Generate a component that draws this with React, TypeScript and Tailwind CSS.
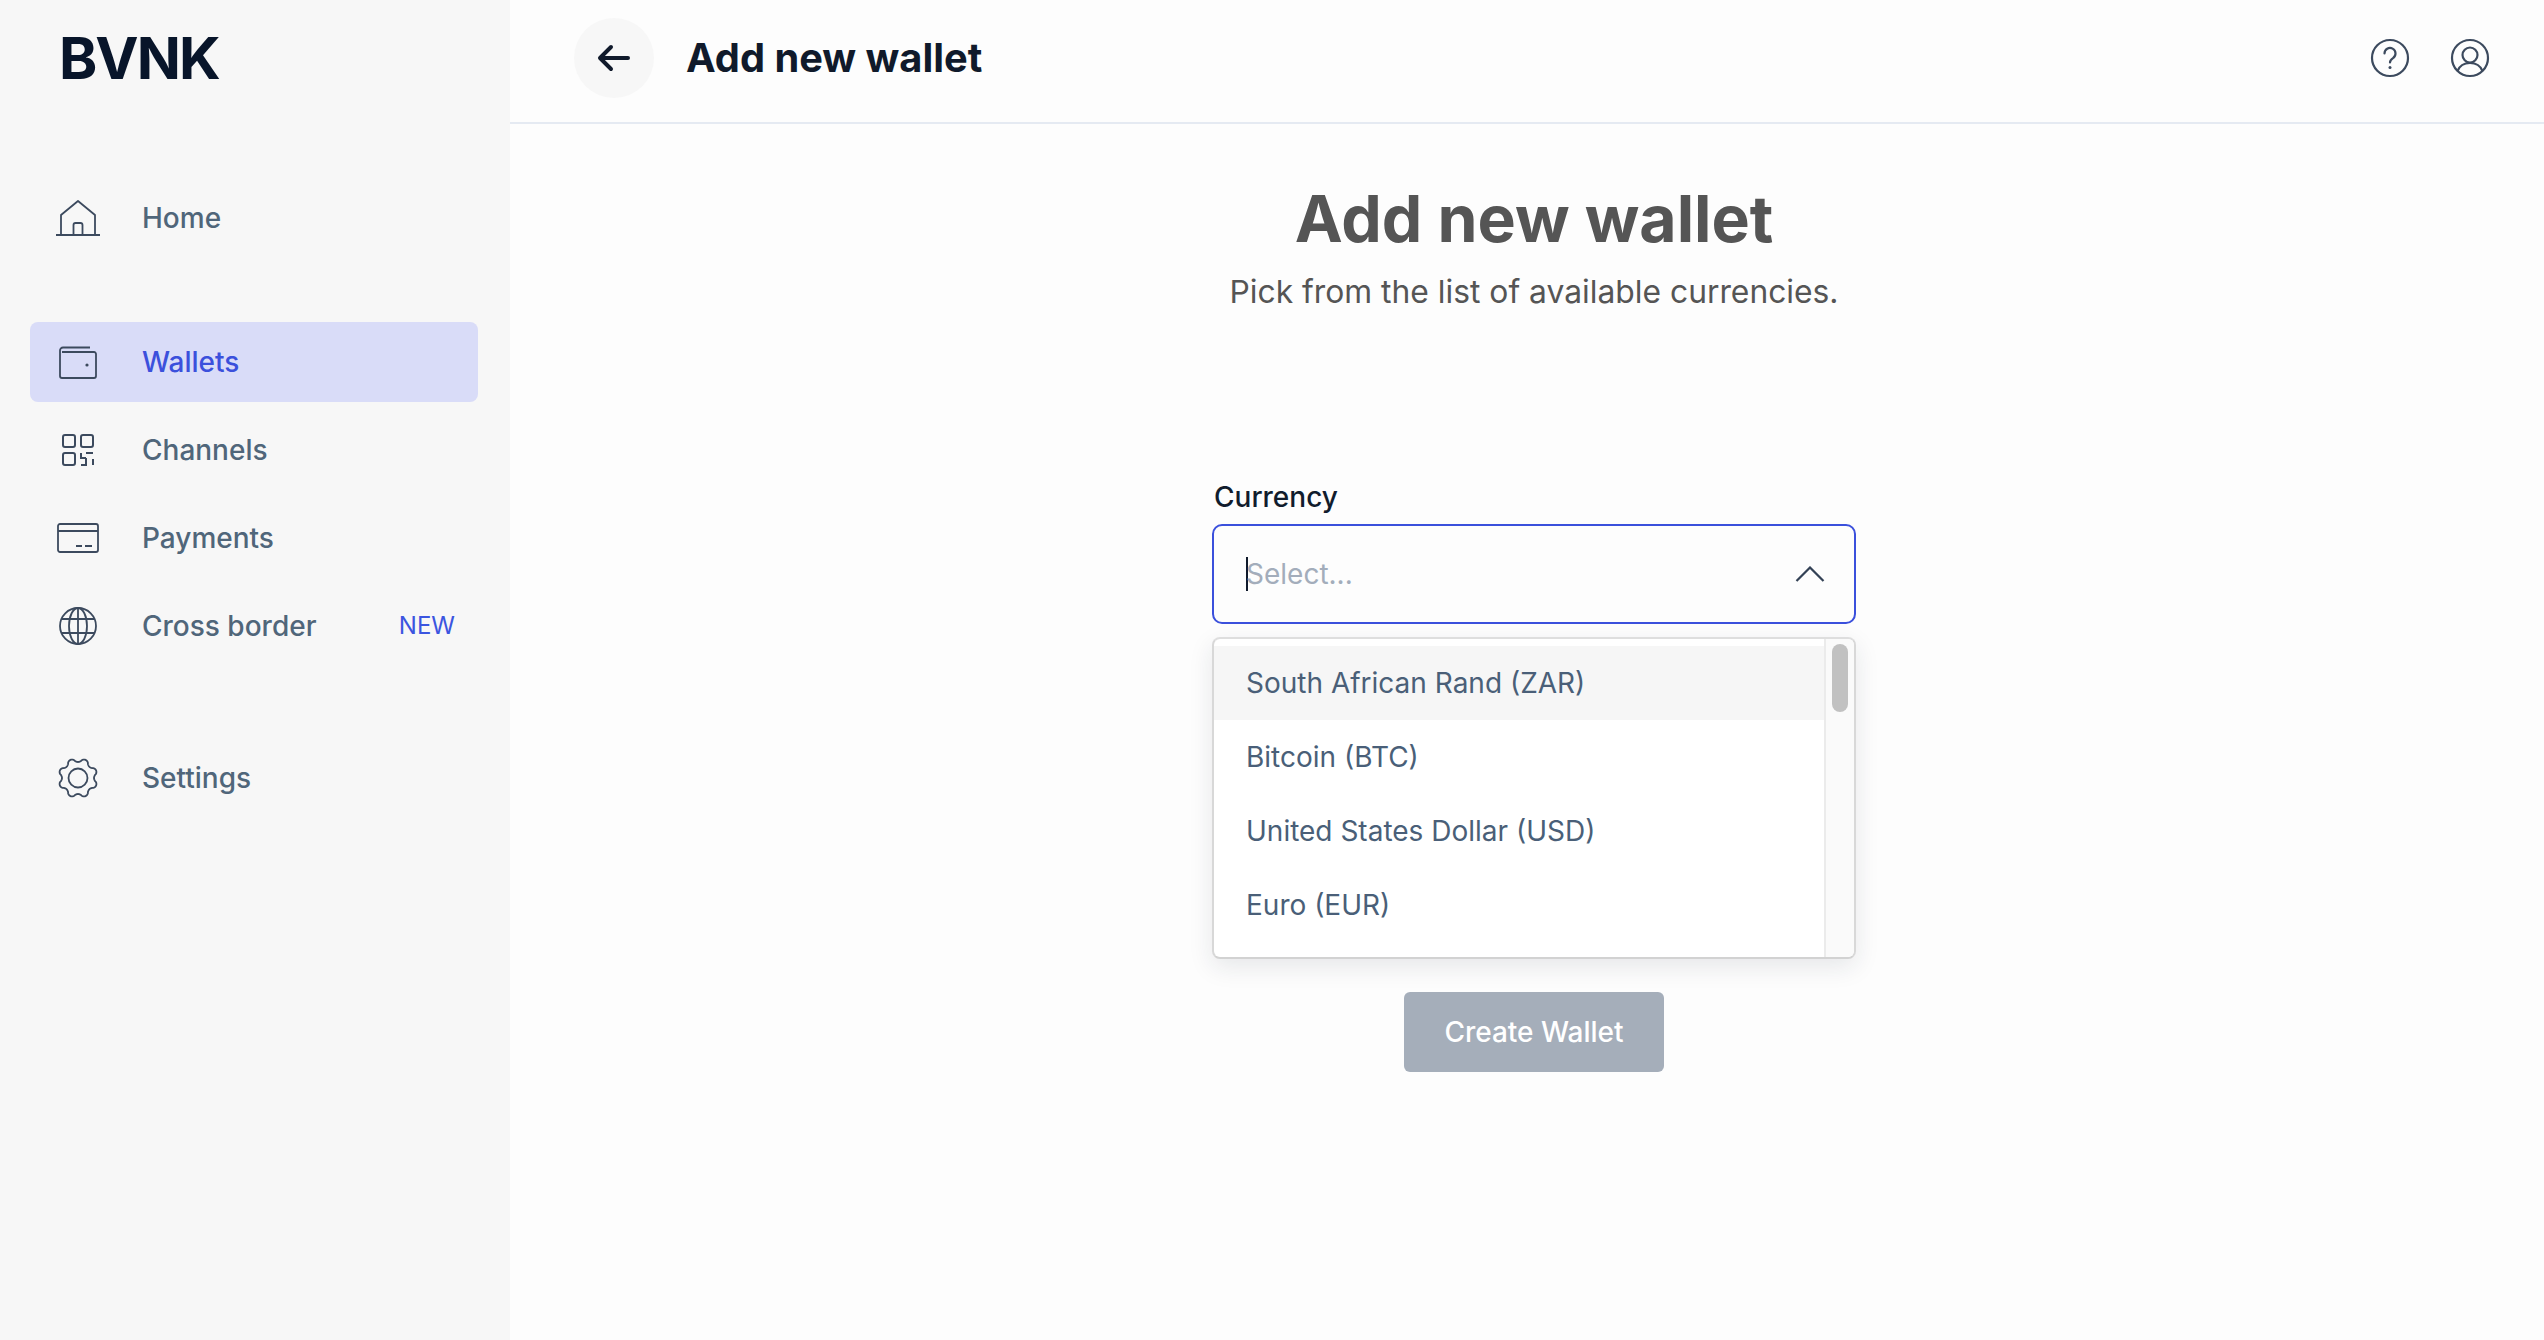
import React from "react";

function gearPath(cx: number, cy: number, base: number, amp: number, lobes: number) {
  const pts: string[] = [];
  const n = 240;
  for (let i = 0; i <= n; i++) {
    const t = (i / n) * Math.PI * 2;
    const w = Math.cos(lobes * t + Math.PI / 8 * lobes);
    const r = base + amp * Math.sign(w) * Math.pow(Math.abs(w), 0.7);
    pts.push(`${i === 0 ? "M" : "L"}${(cx + r * Math.sin(t)).toFixed(2)} ${(cy - r * Math.cos(t)).toFixed(2)}`);
  }
  return pts.join(" ") + "Z";
}

const HomeIcon = () => (
  <svg width="44" height="38" viewBox="0 0 44 38" fill="none" stroke="#3c4a5e" strokeWidth="1.800">
    <path d="M0 36H44" />
    <path d="M5 36V16L22 2L39 16V36" strokeLinejoin="round" />
    <path d="M17.500 36V26a2 2 0 0 1 2-2h5a2 2 0 0 1 2 2V36" />
  </svg>
);
const WalletIcon = () => (
  <svg width="38" height="33" viewBox="0 0 38 33" fill="none" stroke="#3c4a5e" strokeWidth="1.800">
    <path d="M31 1.500H4a3 3 0 0 0-3 3V30a2 2 0 0 0 2 2H35a2 2 0 0 0 2-2V8a2 2 0 0 0-2-2H3" />
    <circle cx="28" cy="19" r="1.600" fill="#3c4a5e" stroke="none" />
  </svg>
);
const QrIcon = () => (
  <svg width="32" height="32" viewBox="0 0 32 32" fill="none" stroke="#3c4a5e" strokeWidth="2">
    <rect x="1" y="1" width="12" height="12" rx="2" />
    <rect x="19" y="1" width="12" height="12" rx="2" />
    <rect x="1" y="19" width="12" height="12" rx="2" />
    <path d="M19 19V24H24M24 19H31M24 24V31H19M31 25V31M19 28H19.010" />
  </svg>
);
const CardIcon = () => (
  <svg width="42" height="30" viewBox="0 0 42 30" fill="none" stroke="#3c4a5e" strokeWidth="1.800">
    <rect x="1" y="1" width="40" height="28" rx="2" />
    <path d="M1 8H41M19 23H25M28 23H35" />
  </svg>
);
const GlobeIcon = () => (
  <svg width="40" height="40" viewBox="0 0 40 40" fill="none" stroke="#3c4a5e" strokeWidth="1.800">
    <circle cx="20" cy="20" r="18" />
    <ellipse cx="20" cy="20" rx="9" ry="18" />
    <path d="M4 13H36M4 27H36M20 2V38" />
  </svg>
);
const GearIcon = () => (
  <svg width="42" height="42" viewBox="0 0 42 42" fill="none" stroke="#3c4a5e" strokeWidth="1.800" strokeLinejoin="round">
    <path d={gearPath(21, 21, 17.8, 1.8, 8)} />
    <circle cx="21" cy="21" r="9.500" />
  </svg>
);

function NavItem({ icon, label, active, badge, className }: { icon: React.ReactNode; label: string; active?: boolean; badge?: string; className?: string }) {
  return (
    <div className={`flex h-[80px] items-center rounded-[8px] ${active ? "bg-[#d9dcf8]" : ""} ${className ?? ""}`}>
      <div className="flex w-[96px] shrink-0 items-center justify-center">{icon}</div>
      <span className={`ml-[16px] text-[28px] font-medium ${active ? "text-[#3b50dc]" : "text-[#50667a]"}`}>{label}</span>
      {badge && <span className="ml-auto mr-[23px] text-[24px] text-[#3b55e0]">{badge}</span>}
    </div>
  );
}

export default function App() {
  return (
    <div className="flex h-screen w-full overflow-hidden bg-[#fdfdfd] font-['Inter',sans-serif]">
      <aside className="flex w-[510px] shrink-0 flex-col bg-[#f7f7f7] pl-[30px] pr-[32px]">
        <div className="mt-[22px] h-[72px] pl-[29px] text-[58px] font-bold leading-[72px] tracking-[-2px] text-[#08152a]">BVNK</div>
        <NavItem className="mt-[84px]" icon={<HomeIcon />} label="Home" />
        <NavItem className="mt-[64px]" icon={<WalletIcon />} label="Wallets" active />
        <NavItem className="mt-[8px]" icon={<QrIcon />} label="Channels" />
        <NavItem className="mt-[8px]" icon={<CardIcon />} label="Payments" />
        <NavItem className="mt-[8px]" icon={<GlobeIcon />} label="Cross border" badge="NEW" />
        <NavItem className="mt-[72px]" icon={<GearIcon />} label="Settings" />
      </aside>
      <div className="flex min-w-0 flex-1 flex-col">
        <header className="flex h-[124px] shrink-0 items-center border-b-2 border-[#e5eaf2] pb-[6px] pl-[64px] pr-[54px]">
          <div className="flex h-[80px] w-[80px] items-center justify-center rounded-full bg-[#f7f7f7]">
            <svg width="34" height="28" viewBox="0 0 34 28" fill="none" stroke="#101a2b" strokeWidth="4" strokeLinecap="round" strokeLinejoin="round">
              <path d="M31 14H3.500M14 3L3 14L14 25" />
            </svg>
          </div>
          <h1 className="ml-[32px] text-[39.8px] font-bold text-[#101a2b]">Add new wallet</h1>
          <div className="ml-auto flex items-center gap-[40px]">
            <svg width="40" height="40" viewBox="0 0 40 40" fill="none" stroke="#3c4a5e" strokeWidth="2.200" strokeLinecap="round">
              <circle cx="20" cy="20" r="18" />
              <path d="M14.500 15.500a5.500 5.500 0 1 1 8.500 4.600c-2 1.300-3 2.400-3 4.400" />
              <circle cx="20" cy="29.500" r="1.500" fill="#3c4a5e" stroke="none" />
            </svg>
            <svg width="40" height="40" viewBox="0 0 40 40" fill="none" stroke="#3c4a5e" strokeWidth="2.200">
              <circle cx="20" cy="20" r="18" />
              <circle cx="20" cy="17" r="7.500" />
              <path d="M7.500 33c2-5 7-8 12.500-8s10.500 3 12.500 8" />
            </svg>
          </div>
        </header>
        <main className="flex flex-1 flex-col items-center pl-[14px]">
          <h2 className="mt-[51px] text-[64.3px] font-bold leading-[88px] text-[#555555]">Add new wallet</h2>
          <p className="mt-[7px] text-[31.8px] leading-[44px] text-[#555555]">Pick from the list of available currencies.</p>
          <div className="relative mt-[165px] w-[644px]">
            <label className="block pl-[2px] text-[28px] font-medium leading-[36px] text-[#111c2d]">Currency</label>
            <div className="mt-[9px] flex h-[100px] items-center rounded-[10px] border-2 border-[#3b50dc] pl-[32px] pr-[29px]">
              <span className="h-[34px] w-[2px] bg-[#101a2b]" />
              <span className="-ml-[2px] text-[28px] text-[#a3adbb]">Select...</span>
              <svg className="ml-auto" width="30" height="16" viewBox="0 0 30 16" fill="none" stroke="#334155" strokeWidth="2.200">
                <path d="M1.500 15L15 1.500L28.500 15" />
              </svg>
            </div>
            <div className="absolute left-0 right-0 top-[158px] flex h-[322px] overflow-hidden rounded-[8px] border-x-2 border-y-2 border-x-[#d8d8d8] border-t-[#dedede] border-b-[#d2d2d2] bg-white shadow-[0_8px_24px_rgba(30,40,60,0.10)]">
              <div className="flex-1 pt-[7px]">
                {["South African Rand (ZAR)", "Bitcoin (BTC)", "United States Dollar (USD)", "Euro (EUR)"].map((t, i) => (
                  <div key={t} className={`flex h-[74px] items-center pl-[32px] text-[28px] text-[#4a5f78] ${i === 0 ? "bg-[#f6f6f6]" : ""}`}>{t}</div>
                ))}
              </div>
              <div className="w-[30px] shrink-0 border-l-2 border-[#ebebeb] bg-[#fafafa] pl-[6px] pt-[5px]">
                <div className="h-[68px] w-[16px] rounded-full bg-[#c1c1c1]" />
              </div>
            </div>
          </div>
          <button className="mt-[368px] h-[80px] w-[260px] rounded-[6px] bg-[#a5aeba] text-[28px] font-medium text-white">Create Wallet</button>
        </main>
      </div>
    </div>
  );
}
